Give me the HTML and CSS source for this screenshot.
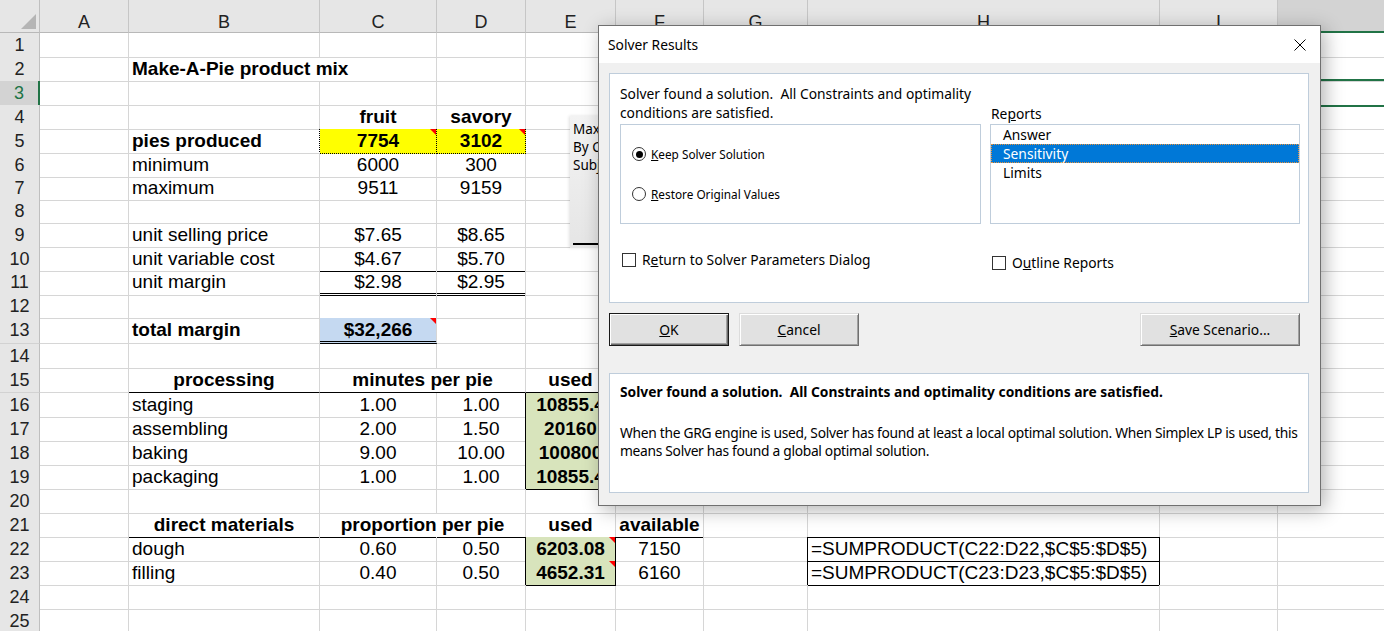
FILE: index.html
```html
<!DOCTYPE html>
<html>
<head>
<meta charset="utf-8">
<title>Solver Results</title>
<link rel="stylesheet" href="styles.css">
</head>
<body>
<div class="sheet">
  <div class="row hdr"><div class="corner"></div><div class="ch">A</div><div class="ch">B</div><div class="ch">C</div><div class="ch">D</div><div class="ch">E</div><div class="ch">F</div><div class="ch">G</div><div class="ch">H</div><div class="ch">I</div><div class="ch csel"></div></div>
  <div class="row"><div class="rh">1</div><div class="c"></div><div class="c"></div><div class="c"></div><div class="c"></div><div class="c"></div><div class="c"></div><div class="c"></div><div class="c"></div><div class="c"></div><div class="c"></div></div>
  <div class="row"><div class="rh">2</div><div class="c"></div><div class="c b nbr">Make-A-Pie product mix</div><div class="c"></div><div class="c"></div><div class="c"></div><div class="c"></div><div class="c"></div><div class="c"></div><div class="c"></div><div class="c"></div></div>
  <div class="row"><div class="rh rsel">3</div><div class="c"></div><div class="c"></div><div class="c"></div><div class="c"></div><div class="c"></div><div class="c"></div><div class="c"></div><div class="c"></div><div class="c"></div><div class="c sel"></div></div>
  <div class="row"><div class="rh">4</div><div class="c"></div><div class="c"></div><div class="c b ctr db">fruit</div><div class="c b ctr db">savory</div><div class="c"></div><div class="c"></div><div class="c"></div><div class="c"></div><div class="c"></div><div class="c"></div></div>
  <div class="row"><div class="rh">5</div><div class="c"></div><div class="c b dr">pies produced</div><div class="c b ctr yel dr db tri">7754</div><div class="c b ctr yel dr db tri">3102</div><div class="c"></div><div class="c"></div><div class="c"></div><div class="c"></div><div class="c"></div><div class="c"></div></div>
  <div class="row h23"><div class="rh">6</div><div class="c"></div><div class="c">minimum</div><div class="c ctr">6000</div><div class="c ctr">300</div><div class="c"></div><div class="c"></div><div class="c"></div><div class="c"></div><div class="c"></div><div class="c"></div></div>
  <div class="row h23"><div class="rh">7</div><div class="c"></div><div class="c">maximum</div><div class="c ctr">9511</div><div class="c ctr">9159</div><div class="c"></div><div class="c"></div><div class="c"></div><div class="c"></div><div class="c"></div><div class="c"></div></div>
  <div class="row"><div class="rh">8</div><div class="c"></div><div class="c"></div><div class="c"></div><div class="c"></div><div class="c"></div><div class="c"></div><div class="c"></div><div class="c"></div><div class="c"></div><div class="c"></div></div>
  <div class="row"><div class="rh">9</div><div class="c"></div><div class="c">unit selling price</div><div class="c ctr">$7.65</div><div class="c ctr">$8.65</div><div class="c"></div><div class="c"></div><div class="c"></div><div class="c"></div><div class="c"></div><div class="c"></div></div>
  <div class="row h23"><div class="rh">10</div><div class="c"></div><div class="c">unit variable cost</div><div class="c ctr bb">$4.67</div><div class="c ctr bb">$5.70</div><div class="c"></div><div class="c"></div><div class="c"></div><div class="c"></div><div class="c"></div><div class="c"></div></div>
  <div class="row"><div class="rh">11</div><div class="c"></div><div class="c">unit margin</div><div class="c ctr bbd">$2.98</div><div class="c ctr bbd">$2.95</div><div class="c"></div><div class="c"></div><div class="c"></div><div class="c"></div><div class="c"></div><div class="c"></div></div>
  <div class="row"><div class="rh">12</div><div class="c"></div><div class="c"></div><div class="c"></div><div class="c"></div><div class="c"></div><div class="c"></div><div class="c"></div><div class="c"></div><div class="c"></div><div class="c"></div></div>
  <div class="row h26"><div class="rh">13</div><div class="c"></div><div class="c b">total margin</div><div class="c b ctr blu bbd tri">$32,266</div><div class="c"></div><div class="c"></div><div class="c"></div><div class="c"></div><div class="c"></div><div class="c"></div><div class="c"></div></div>
  <div class="row"><div class="rh">14</div><div class="c"></div><div class="c"></div><div class="c"></div><div class="c"></div><div class="c"></div><div class="c"></div><div class="c"></div><div class="c"></div><div class="c"></div><div class="c"></div></div>
  <div class="row h25"><div class="rh">15</div><div class="c"></div><div class="c b ctr bb">processing</div><div class="c b ctr bb span2">minutes per pie</div><div class="c b ctr bb">used</div><div class="c bb"></div><div class="c"></div><div class="c"></div><div class="c"></div><div class="c"></div></div>
  <div class="row"><div class="rh">16</div><div class="c"></div><div class="c">staging</div><div class="c ctr">1.00</div><div class="c ctr br">1.00</div><div class="c b ctr grn bb br">10855.4</div><div class="c"></div><div class="c"></div><div class="c"></div><div class="c"></div><div class="c"></div></div>
  <div class="row"><div class="rh">17</div><div class="c"></div><div class="c">assembling</div><div class="c ctr">2.00</div><div class="c ctr br">1.50</div><div class="c b ctr grn bb br">20160</div><div class="c"></div><div class="c"></div><div class="c"></div><div class="c"></div><div class="c"></div></div>
  <div class="row"><div class="rh">18</div><div class="c"></div><div class="c">baking</div><div class="c ctr">9.00</div><div class="c ctr br">10.00</div><div class="c b ctr grn bb br">100800</div><div class="c"></div><div class="c"></div><div class="c"></div><div class="c"></div><div class="c"></div></div>
  <div class="row"><div class="rh">19</div><div class="c"></div><div class="c">packaging</div><div class="c ctr">1.00</div><div class="c ctr br">1.00</div><div class="c b ctr grn bb br">10855.4</div><div class="c"></div><div class="c"></div><div class="c"></div><div class="c"></div><div class="c"></div></div>
  <div class="row"><div class="rh">20</div><div class="c"></div><div class="c"></div><div class="c"></div><div class="c"></div><div class="c"></div><div class="c"></div><div class="c"></div><div class="c"></div><div class="c"></div><div class="c"></div></div>
  <div class="row"><div class="rh">21</div><div class="c"></div><div class="c b ctr bb">direct materials</div><div class="c b ctr bb span2">proportion per pie</div><div class="c b ctr bb">used</div><div class="c b ctr bb">available</div><div class="c"></div><div class="c bb"></div><div class="c"></div><div class="c"></div></div>
  <div class="row"><div class="rh">22</div><div class="c"></div><div class="c">dough</div><div class="c ctr">0.60</div><div class="c ctr br">0.50</div><div class="c b ctr grn bb br tri">6203.08</div><div class="c ctr">7150</div><div class="c br"></div><div class="c bb br">=SUMPRODUCT(C22:D22,$C$5:$D$5)</div><div class="c"></div><div class="c"></div></div>
  <div class="row"><div class="rh">23</div><div class="c"></div><div class="c">filling</div><div class="c ctr">0.40</div><div class="c ctr br">0.50</div><div class="c b ctr grn bb br tri">4652.31</div><div class="c ctr">6160</div><div class="c br"></div><div class="c bb br">=SUMPRODUCT(C23:D23,$C$5:$D$5)</div><div class="c"></div><div class="c"></div></div>
  <div class="row"><div class="rh">24</div><div class="c"></div><div class="c"></div><div class="c"></div><div class="c"></div><div class="c"></div><div class="c"></div><div class="c"></div><div class="c"></div><div class="c"></div><div class="c"></div></div>
  <div class="row"><div class="rh">25</div><div class="c"></div><div class="c"></div><div class="c"></div><div class="c"></div><div class="c"></div><div class="c"></div><div class="c"></div><div class="c"></div><div class="c"></div><div class="c"></div></div>
</div>

<div class="behind">
  <div class="behind-text">Max<br>By C<br>Subj</div>
  <div class="behind-rule"></div>
</div>

<div class="dialog">
  <div class="titlebar">
    <span class="title">Solver Results</span>
    <svg class="close" width="12" height="12" viewBox="0 0 12 12"><path d="M0.5 0.5 L11.5 11.5 M11.5 0.5 L0.5 11.5" stroke="#000" stroke-width="1" fill="none"/></svg>
  </div>
  <div class="dbody">
    <div class="panel top">
      <div class="cols">
        <div class="left">
          <div class="msg">Solver found a solution.&nbsp; All Constraints and optimality<br>conditions are satisfied.</div>
          <div class="frame">
            <div class="opt"><span class="radio on"></span><span><u>K</u>eep Solver Solution</span></div>
            <div class="opt"><span class="radio"></span><span><u>R</u>estore Original Values</span></div>
          </div>
        </div>
        <div class="right">
          <div class="rlabel">Re<u>p</u>orts</div>
          <div class="list">
            <div class="item">Answer</div>
            <div class="item selected">Sensitivity</div>
            <div class="item">Limits</div>
          </div>
        </div>
      </div>
      <div class="checks">
        <div class="chk first"><span class="box"></span><span>R<u>e</u>turn to Solver Parameters Dialog</span></div>
        <div class="chk outline"><span class="box"></span><span>O<u>u</u>tline Reports</span></div>
      </div>
    </div>
    <div class="buttons">
      <div class="btn default"><span><u>O</u>K</span></div>
      <div class="btn"><span><u>C</u>ancel</span></div>
      <div class="spacer"></div>
      <div class="btn wide"><span><u>S</u>ave Scenario...</span></div>
    </div>
    <div class="panel bottom">
      <div class="bold">Solver found a solution.&nbsp; All Constraints and optimality conditions are satisfied.</div>
      <div class="desc">When the GRG engine is used, Solver has found at least a local optimal solution. When Simplex LP is used, this<br>means Solver has found a global optimal solution.</div>
    </div>
  </div>
</div>
</body>
</html>
```

FILE: styles.css
```css
* { box-sizing: border-box; }
html, body { margin: 0; padding: 0; }
body {
  width: 1384px;
  height: 631px;
  overflow: hidden;
  position: relative;
  background: #fff;
  color: #000;
  font-family: "Liberation Sans", Arial, sans-serif;
}

/* ---------- spreadsheet ---------- */
.sheet { width: 1480px; }
.row {
  display: grid;
  grid-template-columns: 40px 89px 191px 117px 89px 90px 88px 104px 352px 118px 240px;
  height: 24px;
}
.row.hdr { height: 33px; }
.row.h23 { height: 23px; }
.row.h25 { height: 25px; }
.row.h26 { height: 26px; }

.corner {
  position: relative;
  background: #e6e6e6;
  border-right: 1px solid #bfbfbf;
  border-bottom: 1px solid #b8b8b8;
}
.corner::after {
  content: "";
  position: absolute;
  right: 3px;
  bottom: 3px;
  border-style: solid;
  border-width: 0 0 15px 15px;
  border-color: transparent transparent #b5b5b5 transparent;
}
.ch {
  background: #e6e6e6;
  border-right: 1px solid #c6c6c6;
  border-bottom: 1px solid #b8b8b8;
  display: flex;
  align-items: flex-end;
  justify-content: center;
  font-size: 18px;
  line-height: 20px;
  color: #222;
}
.ch.csel {
  background: #d3d3d3;
  border-bottom: 2px solid #217346;
}
.rh {
  background: #e6e6e6;
  border-right: 1px solid #bfbfbf;
  border-bottom: 1px solid #d2d2d2;
  font-size: 18px;
  line-height: 23px;
  padding-top: 1px;
  text-align: center;
  color: #222;
}
.rh.rsel {
  background: #d3d3d3;
  color: #217346;
  border-right: 2px solid #217346;
}

.c {
  border-right: 1px solid #d6d6d6;
  border-bottom: 1px solid #d6d6d6;
  font-size: 19px;
  line-height: 23px;
  padding: 0 3px;
  white-space: nowrap;
}
.b { font-weight: bold; }
.ctr { text-align: center; }
.span2 { grid-column: span 2; }
.nbr { border-right-color: transparent; }
.bb { border-bottom-color: #000; }
.br { border-right-color: #000; }
.bbd { border-bottom: 3px double #000; }
.dr { border-right: 1px dotted #000; }
.db { border-bottom: 1px dotted #000; }
.yel { background: #ffff00; }
.blu { background: #c5d9f1; }
.grn { background: #d8e4bc; }

.tri { position: relative; }
.tri::after {
  content: "";
  position: absolute;
  top: 0;
  right: 0;
  border-style: solid;
  border-width: 0 6px 6px 0;
  border-color: transparent #ff0000 transparent transparent;
}
.sel { position: relative; }
.sel::after {
  content: "";
  position: absolute;
  left: -2px;
  top: -2px;
  right: -2px;
  bottom: -2px;
  border: 2px solid #217346;
}

/* ---------- dialog behind ---------- */
.behind {
  position: absolute;
  left: 570px;
  top: 116px;
  width: 40px;
  height: 132px;
  background: linear-gradient(#f3f3f3, #e5e5e5);
  box-shadow: -1px 0 3px rgba(0, 0, 0, 0.12);
  padding: 4px 0 0 3px;
  font-family: "Noto Sans", sans-serif;
  font-size: 13.5px;
  line-height: 18px;
  white-space: nowrap;
  overflow: hidden;
}
.behind-rule {
  margin-top: 69px;
  height: 2px;
  background: #000;
}

/* ---------- Solver Results dialog ---------- */
.dialog {
  position: absolute;
  left: 598px;
  top: 25px;
  width: 723px;
  height: 481px;
  border: 1px solid #707070;
  background: #f0f0f0;
  box-shadow: 4px 4px 18px rgba(0, 0, 0, 0.3);
  font-family: "Noto Sans", sans-serif;
  font-size: 13.8px;
  color: #000;
}
.titlebar {
  height: 37px;
  background: #fff;
  display: flex;
  align-items: center;
  justify-content: space-between;
  padding: 0 14px 0 9px;
}
.close { display: block; }
.dbody { padding: 10px 11px 0 10px; }
.panel {
  background: #fff;
  border: 1px solid #bfcddb;
}
.panel.top { height: 230px; }
.cols { display: flex; }
.left { width: 380px; }
.msg {
  padding: 10px 0 0 10px;
  line-height: 19px;
  white-space: nowrap;
}
.frame {
  margin: 2px 0 0 10px;
  width: 361px;
  height: 100px;
  border: 1px solid #bfcddb;
  padding: 19px 0 0 11px;
}
.opt {
  display: flex;
  align-items: center;
  height: 20px;
  white-space: nowrap;
  font-size: 11.8px;
}
.opt + .opt { margin-top: 20px; }
.radio {
  width: 14px;
  height: 14px;
  border: 1px solid #333;
  border-radius: 50%;
  background: #fff;
  margin-right: 5px;
  display: flex;
  align-items: center;
  justify-content: center;
  flex: none;
}
.radio.on::after {
  content: "";
  width: 7px;
  height: 7px;
  border-radius: 50%;
  background: #000;
}
.right { padding-top: 30px; }
.rlabel { line-height: 19px; padding-left: 1px; height: 20px; }
.list {
  width: 310px;
  height: 100px;
  border: 1px solid #bfcddb;
}
.item {
  height: 19px;
  line-height: 19px;
  padding-left: 12px;
}
.item.selected {
  background: #0078d7;
  color: #fff;
  outline: 1px dotted #e8913a;
  outline-offset: -1px;
}
.checks {
  display: flex;
  align-items: flex-start;
  margin-top: 26px;
  padding-left: 12px;
}
.chk {
  display: flex;
  align-items: center;
  line-height: 19px;
  white-space: nowrap;
}
.chk.first { width: 370px; }
.chk.outline { margin-top: 3px; }
.box {
  width: 14px;
  height: 14px;
  border: 1px solid #333;
  background: #fff;
  margin-right: 6px;
  flex: none;
}
.buttons {
  display: flex;
  margin-top: 10px;
  padding-right: 9px;
}
.btn {
  width: 120px;
  height: 33px;
  display: flex;
  align-items: center;
  justify-content: center;
  background: #e1e1e1;
  border: 1px solid;
  border-color: #dcdcdc #707070 #707070 #dcdcdc;
  box-shadow: inset 1px 1px 0 #fff, inset -1px -1px 0 #a0a0a0;
}
.btn + .btn { margin-left: 10px; }
.btn.default {
  border-color: #1a1a1a;
  box-shadow: inset 1px 1px 0 #fff, inset -1px -1px 0 #696969, inset -2px -2px 0 #a0a0a0;
}
.btn.wide { width: 160px; }
.spacer { flex: 1; }
.panel.bottom {
  margin-top: 27px;
  height: 120px;
  padding: 8px 0 0 10px;
  white-space: nowrap;
}
.bold { font-weight: bold; line-height: 19px; }
.desc { margin-top: 23px; line-height: 18px; letter-spacing: -0.3px; }
```
